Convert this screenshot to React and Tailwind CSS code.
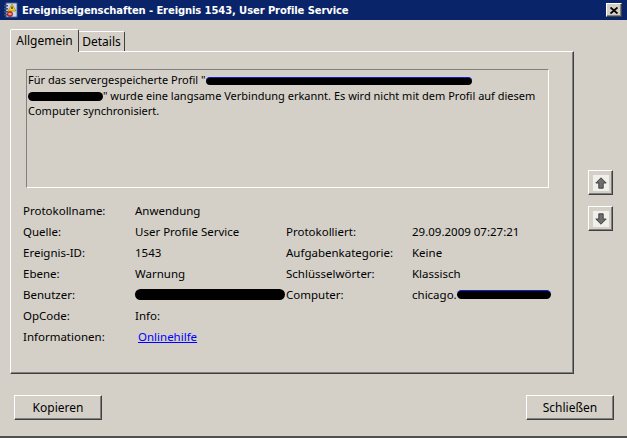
import React from 'react';

const font = "font-['Noto_Sans',sans-serif]";

function TitleIcon() {
  return (
    <svg width="16" height="16" viewBox="0 0 16 16" className="shrink-0">
      <rect x="3" y="1" width="11" height="14" fill="#e8eef8" stroke="#3a5a9a" />
      <rect x="4" y="2" width="9" height="12" fill="#c9d6ee" />
      {[3, 6, 9, 12].map((y) => (
        <rect key={y} x="1" y={y} width="4" height="1.5" fill="#40507a" />
      ))}
      <path d="M9 2 L13 9 L5 9 Z" fill="#f5d020" stroke="#9a7a00" strokeWidth="0.6" />
      <rect x="8.5" y="4.5" width="1" height="2.5" fill="#000" />
      <circle cx="7" cy="12" r="2.6" fill="#e03020" stroke="#801010" strokeWidth="0.6" />
      <rect x="5.5" y="11.5" width="3" height="1" fill="#fff" />
    </svg>
  );
}

function CloseButton() {
  return (
    <div className="w-[16px] h-[14px] bg-[#d4d0c8] border border-t-white border-l-white border-r-[#404040] border-b-[#404040] shadow-[inset_-1px_-1px_#808080] flex items-center justify-center">
      <svg width="8" height="7" viewBox="0 0 8 7">
        <path d="M0.5 0.5 L7.5 6.5 M7.5 0.5 L0.5 6.5" stroke="#000" strokeWidth="1.8" />
      </svg>
    </div>
  );
}

function ArrowButton({ down }) {
  return (
    <div className="w-[25px] h-[25px] bg-[#d4d0c8] border border-t-white border-l-white border-r-[#404040] border-b-[#404040] shadow-[inset_-1px_-1px_#808080] flex items-center justify-center">
      <div className="w-[16px] h-[16px] bg-[#f1efe9] flex items-center justify-center">
        <svg width="12" height="12" viewBox="0 0 12 12" className={down ? 'rotate-180' : ''}>
          <path d="M6 0.8 L11.2 6 L8.2 6 L8.2 11.2 L3.8 11.2 L3.8 6 L0.8 6 Z" fill="#6e6e6e" stroke="#3a3a3a" strokeWidth="0.9" strokeLinejoin="round" />
        </svg>
      </div>
    </div>
  );
}

function Button({ children }) {
  return (
    <div className="w-[88px] h-[25px] bg-[#d4d0c8] border border-t-white border-l-white border-r-[#404040] border-b-[#404040] shadow-[inset_-1px_-1px_#808080] flex items-center justify-center text-[12px] text-black">
      {children}
    </div>
  );
}

const Redact = ({ w, h = 9, blue = false }) => (
  <span
    className={`inline-block align-middle bg-black rounded-full ${blue ? 'border-t border-[#1020d0]' : ''}`}
    style={{ width: w, height: h }}
  />
);

const rows = [
  ['Protokollname:', 'Anwendung', '', ''],
  ['Quelle:', 'User Profile Service', 'Protokolliert:', '29.09.2009 07:27:21'],
  ['Ereignis-ID:', '1543', 'Aufgabenkategorie:', 'Keine'],
  ['Ebene:', 'Warnung', 'Schlüsselwörter:', 'Klassisch'],
  ['Benutzer:', 'user', 'Computer:', 'computer'],
  ['OpCode:', 'Info:', '', ''],
  ['Informationen:', 'link', '', ''],
];

function Value({ v }) {
  if (v === 'user') return <Redact w={150} h={11} />;
  if (v === 'computer')
    return (
      <span className="flex items-center">
        chicago.
        <Redact w={94} h={9} blue />
      </span>
    );
  if (v === 'link')
    return <span className="ml-[3px] text-[#0000ff] underline">Onlinehilfe</span>;
  return v;
}

export default function App() {
  return (
    <div className={`w-[627px] h-[438px] bg-[#d4d0c8] flex flex-col border-b-2 border-[#505050] ${font} text-[11.5px] text-black`}>
      {/* Title bar */}
      <div className="h-[20px] bg-[#0a246a] flex items-center pl-[3px] pr-[5px] gap-[3px]">
        <TitleIcon />
        <span className="text-white font-bold text-[10px] font-['DejaVu_Sans',sans-serif] tracking-[-0.1px] flex-1">
          Ereigniseigenschaften - Ereignis 1543, User Profile Service
        </span>
        <CloseButton />
      </div>

      <div className="flex pl-[10px] pt-[9px]">
        <div className="w-[564px] flex flex-col">
          {/* Tabs */}
          <div className="flex h-[22px] items-end">
            <div className="w-[69px] h-[23px] -mb-px z-10 bg-[#d4d0c8] border-t border-l border-white border-r border-r-[#404040] rounded-t-[2px] flex items-center justify-center text-[12px]">
              Allgemein
            </div>
            <div className="w-[46px] h-[20px] bg-[#d4d0c8] border-t border-white border-r border-r-[#404040] rounded-tr-[2px] flex items-center justify-center text-[12px]">
              Details
            </div>
          </div>

          {/* Panel */}
          <div className="h-[323px] border border-t-white border-l-white border-r-[#404040] border-b-[#404040] shadow-[inset_-1px_-1px_#808080] pl-[12px] pt-[17px]">
            <div className="ml-[3px] w-[523px] h-[119px] border border-t-[#808080] border-l-[#808080] border-r-white border-b-white pl-[1px] pt-[2px] leading-[15.5px] text-[11px] whitespace-nowrap">
              Für das servergespeicherte Profil "<Redact w={266} h={8} blue />
              <br />
              <Redact w={75} h={9} />" wurde eine langsame Verbindung erkannt. Es wird nicht mit dem Profil auf diesem
              <br />
              Computer synchronisiert.
            </div>

            <div className="mt-[12px] grid grid-cols-[112px_151px_126px_1fr]">
              {rows.map((r, i) => (
                <React.Fragment key={i}>
                  <div className="h-[21px] flex items-center">{r[0]}</div>
                  <div className="h-[21px] flex items-center">
                    <Value v={r[1]} />
                  </div>
                  <div className="h-[21px] flex items-center">{r[2]}</div>
                  <div className="h-[21px] flex items-center">
                    <Value v={r[3]} />
                  </div>
                </React.Fragment>
              ))}
            </div>
          </div>
        </div>

        {/* Up / down */}
        <div className="ml-[14px] pt-[141px] flex flex-col gap-[11px]">
          <ArrowButton />
          <ArrowButton down />
        </div>
      </div>

      {/* Bottom buttons */}
      <div className="flex justify-between pl-[14px] pr-[13px] mt-[21px]">
        <Button>Kopieren</Button>
        <Button>Schließen</Button>
      </div>
    </div>
  );
}
